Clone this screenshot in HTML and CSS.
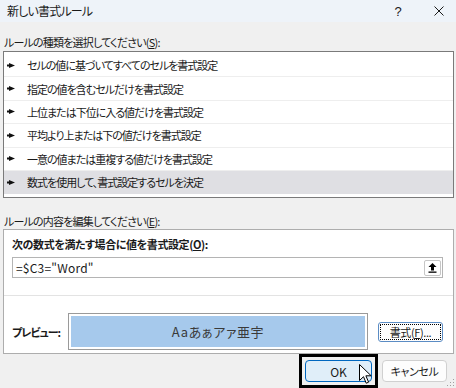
FILE: index.html
```html
<!DOCTYPE html>
<html lang="ja">
<head>
    <meta charset="UTF-8">
    <title>新しい書式ルール</title>
    <link rel="stylesheet" href="styles.css">
</head>
<body>
<div class="dialog">
    <!-- タイトルバー -->
    <div class="titlebar">
        <span class="title">新しい書式ルール</span>
        <div class="controls">
            <span class="ctrl help">?</span>
            <span class="ctrl close">
                <svg width="10" height="10" viewBox="0 0 10 10"><path d="M0.5 0.5L9.5 9.5M9.5 0.5L0.5 9.5" stroke="#1a1a1a" stroke-width="1"/></svg>
            </span>
        </div>
    </div>

    <div class="caption">ルールの種類を選択してください(<u>S</u>):</div>
    <ul class="rule-list">
        <li><svg class="bullet" width="8" height="5" viewBox="0 0 8 5"><path d="M0 1.5h2v2H0z M2 0L8 2.5L2 5z" fill="#111"/></svg>セルの値に基づいてすべてのセルを書式設定</li>
        <li><svg class="bullet" width="8" height="5" viewBox="0 0 8 5"><path d="M0 1.5h2v2H0z M2 0L8 2.5L2 5z" fill="#111"/></svg>指定の値を含むセルだけを書式設定</li>
        <li><svg class="bullet" width="8" height="5" viewBox="0 0 8 5"><path d="M0 1.5h2v2H0z M2 0L8 2.5L2 5z" fill="#111"/></svg>上位または下位に入る値だけを書式設定</li>
        <li><svg class="bullet" width="8" height="5" viewBox="0 0 8 5"><path d="M0 1.5h2v2H0z M2 0L8 2.5L2 5z" fill="#111"/></svg>平均より上または下の値だけを書式設定</li>
        <li><svg class="bullet" width="8" height="5" viewBox="0 0 8 5"><path d="M0 1.5h2v2H0z M2 0L8 2.5L2 5z" fill="#111"/></svg>一意の値または重複する値だけを書式設定</li>
        <li class="selected"><svg class="bullet" width="8" height="5" viewBox="0 0 8 5"><path d="M0 1.5h2v2H0z M2 0L8 2.5L2 5z" fill="#111"/></svg>数式を使用して、書式設定するセルを決定</li>
    </ul>

    <div class="caption caption-edit">ルールの内容を編集してください(<u>E</u>):</div>
    <div class="edit-box">
        <div class="edit-label">次の数式を満たす場合に値を書式設定(<u>O</u>):</div>
        <div class="formula">
            <span class="formula-text">=$C3="Word"</span>
            <button class="collapse-btn">
                <svg width="9" height="10" viewBox="0 0 9 10"><path d="M4.5 0L8.5 4H6v3.5H3V4H0.5z" fill="#000"/><rect x="0.5" y="8.5" width="8" height="1.3" fill="#000"/></svg>
            </button>
        </div>
        <div class="separator"></div>
        <div class="preview-row">
            <span class="preview-label">プレビュー:</span>
            <div class="preview">Aaあぁアァ亜宇</div>
            <button class="format-btn">書式(<u>F</u>)...</button>
        </div>
    </div>

    <div class="actions">
        <span class="focus-frame"><button class="btn ok">OK</button></span>
        <button class="btn cancel">キャンセル</button>
    </div>

    <!-- マウスカーソル -->
    <svg class="cursor" width="13" height="21" viewBox="0 0 13 21">
        <path d="M0.5 0.5V16.5L4.5 12.7L7.2 19.2L9.6 18.2L6.9 11.8H12.2Z" fill="#fff" stroke="#000" stroke-width="1" stroke-linejoin="round"/>
    </svg>

    <!-- サイズ変更グリップ -->
    <svg class="grip" width="8" height="8" viewBox="0 0 8 8">
        <rect x="6" y="0" width="1" height="1" fill="#a0a0a0"/>
        <rect x="3" y="3" width="1" height="1" fill="#a0a0a0"/>
        <rect x="6" y="3" width="1" height="1" fill="#a0a0a0"/>
        <rect x="0" y="6" width="1" height="1" fill="#a0a0a0"/>
        <rect x="3" y="6" width="1" height="1" fill="#a0a0a0"/>
        <rect x="6" y="6" width="1" height="1" fill="#a0a0a0"/>
    </svg>
</div>
</body>
</html>
```

FILE: styles.css
```css
* {
    margin: 0;
    padding: 0;
    box-sizing: border-box;
}

body {
    font-family: "Noto Sans CJK JP", "Noto Sans", sans-serif;
    font-size: 11px;
    letter-spacing: -0.8px;
    font-feature-settings: "palt";
    color: #1a1a1a;
    background: #f0f0f0;
}

.dialog {
    position: relative;
    width: 456px;
    height: 388px;
    overflow: hidden;
    background: #f0f0f0;
}

/* タイトルバー */
.titlebar {
    height: 22px;
    background: #eef3f9;
    display: flex;
    justify-content: space-between;
    align-items: center;
    padding-left: 7px;
    padding-right: 2px;
}

.title {
    font-size: 12px;
    letter-spacing: -0.8px;
    line-height: 16px;
}

.controls {
    display: flex;
    align-items: center;
}

.ctrl {
    width: 30px;
    height: 22px;
    display: flex;
    align-items: center;
    justify-content: center;
}

.help {
    width: 52px;
    font-family: "Liberation Sans", sans-serif;
    font-size: 13px;
    letter-spacing: 0;
}

/* ラベル */
.caption {
    line-height: 16px;
    padding-left: 4px;
    margin-top: 12px;
}

.caption-edit {
    margin-top: 15px;
}

/* ルールの種類リスト */
.rule-list {
    list-style: none;
    margin: 1px 2px 0 3px;
    padding: 2px 0 3px;
    border: 1px solid #7a7a7a;
    background: #fff;
}

.rule-list li {
    height: 23.4px;
    display: flex;
    align-items: center;
    padding-left: 3px;
    border-bottom: 1px solid #eeeeee;
    line-height: 16px;
    letter-spacing: -1px;
}

.rule-list li.selected {
    background: #dfdfe3;
    border-bottom-color: transparent;
}

.bullet {
    flex: none;
    margin-right: 12px;
}

/* ルールの内容 */
.edit-box {
    margin: 0 2px 0 3px;
    border: 1px solid #adadad;
    background: #fff;
    padding: 6px 10px 3px 8px;
}

.edit-label {
    font-weight: bold;
    letter-spacing: -0.4px;
    line-height: 16px;
}

.formula {
    margin-top: 5px;
    height: 21px;
    border: 1px solid #b4b4b4;
    display: flex;
    align-items: center;
    justify-content: space-between;
    padding-left: 3px;
    padding-right: 1px;
}

.formula-text {
    font-size: 12px;
    letter-spacing: 0.2px;
    line-height: 16px;
}

.collapse-btn {
    width: 17px;
    height: 16px;
    border: 1px solid #c6c6c6;
    border-radius: 2px;
    background: #fff;
    display: flex;
    align-items: center;
    justify-content: center;
}

.separator {
    height: 1px;
    background: #e3e3e3;
    margin: 17px -10px 0 -8px;
}

.preview-row {
    margin-top: 17px;
    display: flex;
    align-items: center;
}

.preview-label {
    flex: none;
    width: 56px;
    white-space: nowrap;
    font-weight: bold;
    letter-spacing: -1px;
    line-height: 16px;
}

.preview {
    flex: none;
    width: 300px;
    height: 37px;
    border: 1px solid #9a9a9a;
    box-shadow: inset 0 0 0 2px #fff;
    background: #a6c9ec;
    display: flex;
    align-items: center;
    justify-content: center;
    font-size: 13px;
    letter-spacing: 0.6px;
    color: #3a3a3a;
}

.format-btn {
    flex: none;
    margin-left: 10px;
    width: 65px;
    height: 20px;
    border: 1px solid #5b8cc4;
    border-radius: 3px;
    background: #fdfdfd;
    font-family: inherit;
    font-size: 11px;
    letter-spacing: -0.4px;
    font-feature-settings: "palt";
    color: #1a1a1a;
    outline: 1px dotted #000;
    outline-offset: -3px;
}

/* ボタン */
.actions {
    display: flex;
    justify-content: flex-end;
    align-items: flex-start;
    padding-right: 9px;
}

.focus-frame {
    display: block;
    border: 3px solid #000;
    padding: 3px;
    margin-right: 4px;
}

.btn {
    display: block;
    width: 65px;
    height: 22px;
    border: 1px solid #d0d0d0;
    border-radius: 4px;
    background: #fdfdfd;
    font-family: inherit;
    font-size: 11px;
    letter-spacing: -0.4px;
    font-feature-settings: "palt";
    color: #1a1a1a;
}

.btn.ok {
    width: 67px;
    font-size: 12px;
    letter-spacing: 0;
    background: #e0eef9;
    border-color: #0067c0;
}

.btn.cancel {
    margin-top: 6px;
}

.cursor {
    position: absolute;
    left: 359px;
    top: 364px;
}

.grip {
    position: absolute;
    right: 1px;
    bottom: 1px;
}
```
